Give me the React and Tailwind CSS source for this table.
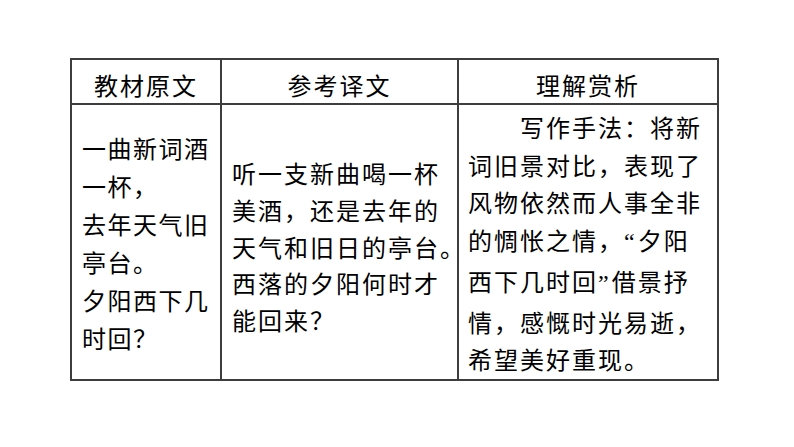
export default function App() {
  const col1 = ["一曲新词酒", "一杯，", "去年天气旧", "亭台。", "夕阳西下几", "时回？"];
  const col2 = ["听一支新曲喝一杯", "美酒，还是去年的", "天气和旧日的亭台", "西落的夕阳何时才", "能回来？"];

  const q = (c) => (
    <span className="font-['Liberation_Serif'] tracking-[3px]">{c}</span>
  );

  return (
    <div
      className="min-h-[447px] w-[794px] bg-white pl-[70px] pt-[58px] text-black"
      style={{ fontFamily: '"Noto Sans CJK SC", "Noto Sans", sans-serif' }}
    >
      <div className="grid w-[649px] grid-cols-[150px_237px_258px] border-2 border-[#3d3d3d] text-[24px]">
        {/* header */}
        <div className="flex h-[45px] items-center justify-center border-b-2 border-r-2 border-[#3d3d3d] pt-[6px] tracking-[2px]">
          教材原文
        </div>
        <div className="flex h-[45px] items-center justify-center border-b-2 border-r-2 border-[#3d3d3d] pt-[6px] tracking-[2px]">
          参考译文
        </div>
        <div className="flex h-[45px] items-center justify-center border-b-2 border-[#3d3d3d] pt-[6px] tracking-[2px]">
          理解赏析
        </div>

        {/* body */}
        <div className="flex h-[274px] items-center border-r-2 border-[#3d3d3d] pl-[10px] pt-[2px] leading-[38px] tracking-[1.5px]">
          <div className="whitespace-nowrap">
            {col1.map((l, i) => (
              <div key={i}>{l}</div>
            ))}
          </div>
        </div>
        <div className="flex h-[274px] items-center border-r-2 border-[#3d3d3d] pl-[10px] pt-[10px] leading-[36.7px] tracking-[2px]">
          <div className="whitespace-nowrap">
            {col2.map((l, i) => (
              <div key={i}>
                {l}
                {i === 2 && <span className="inline-block w-[14px] tracking-[0px]">。</span>}
              </div>
            ))}
          </div>
        </div>
        <div className="flex h-[274px] items-center pl-[9px] pt-[2px] leading-[37.8px] tracking-[2px]">
          <div className="whitespace-nowrap">
            <div className="pl-[52px]">写作手法：将新</div>
            <div>词旧景对比，表现了</div>
            <div>风物依然而人事全非</div>
            <div>的惆怅之情，{q("“")}夕阳</div>
            <div>西下几时回{q("”")}借景抒</div>
            <div>情，感慨时光易逝，</div>
            <div>希望美好重现。</div>
          </div>
        </div>
      </div>
    </div>
  );
}
